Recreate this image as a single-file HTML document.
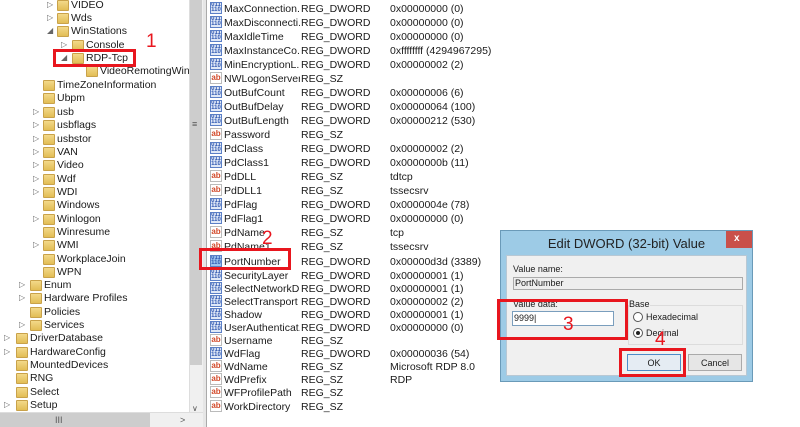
<!DOCTYPE html>
<html><head><meta charset="utf-8"><style>
*{margin:0;padding:0;box-sizing:border-box}
body{width:800px;height:427px;overflow:hidden;background:#fff;font-family:"Liberation Sans",sans-serif;font-size:10.5px;color:#1a1a1a;position:relative}
.a{position:absolute;white-space:nowrap;line-height:14px}
.c{width:76px;overflow:hidden}
.f{position:absolute;width:12px;height:11px;background:linear-gradient(#f3d98a,#e2bd55);border:1px solid #c9a24a;border-radius:1px}
.e{position:absolute;font-size:8px;color:#666;line-height:14px}
.d{position:absolute;width:12px;height:12px;background:#dfe8f7;border:1px solid #5b7fc6;font-size:6px;line-height:5px;color:#2f57b0;font-weight:bold;text-align:center;overflow:hidden}
.s{position:absolute;width:12px;height:12px;background:#fff;border:1px solid #bbb;font-size:8px;line-height:10px;color:#d24a2a;font-weight:bold;text-align:center}
.r{position:absolute;border:3px solid #e8161e}
.n{position:absolute;color:#e8161e;font-size:19px;line-height:20px}
#L{position:absolute;left:0;top:0;width:189px;height:412px;overflow:hidden;background:#fff}
</style></head><body>
<div id="L">
<div class="e" style="left:47px;top:-2px">▷</div><div class="f" style="left:57px;top:0px"></div><div class="a" style="left:71px;top:-2px">VIDEO</div>
<div class="e" style="left:47px;top:11px">▷</div><div class="f" style="left:57px;top:13px"></div><div class="a" style="left:71px;top:11px">Wds</div>
<div class="e" style="left:47px;top:24px">◢</div><div class="f" style="left:57px;top:26px"></div><div class="a" style="left:71px;top:24px">WinStations</div>
<div class="e" style="left:61px;top:38px">▷</div><div class="f" style="left:72px;top:40px"></div><div class="a" style="left:86px;top:38px">Console</div>
<div class="e" style="left:61px;top:51px">◢</div><div class="f" style="left:72px;top:53px"></div><div class="a" style="left:86px;top:51px">RDP-Tcp</div>
<div class="f" style="left:86px;top:66px"></div><div class="a" style="left:100px;top:64px">VideoRemotingWindow</div>
<div class="f" style="left:43px;top:80px"></div><div class="a" style="left:57px;top:78px">TimeZoneInformation</div>
<div class="f" style="left:43px;top:93px"></div><div class="a" style="left:57px;top:91px">Ubpm</div>
<div class="e" style="left:33px;top:105px">▷</div><div class="f" style="left:43px;top:107px"></div><div class="a" style="left:57px;top:105px">usb</div>
<div class="e" style="left:33px;top:118px">▷</div><div class="f" style="left:43px;top:120px"></div><div class="a" style="left:57px;top:118px">usbflags</div>
<div class="e" style="left:33px;top:132px">▷</div><div class="f" style="left:43px;top:134px"></div><div class="a" style="left:57px;top:132px">usbstor</div>
<div class="e" style="left:33px;top:145px">▷</div><div class="f" style="left:43px;top:147px"></div><div class="a" style="left:57px;top:145px">VAN</div>
<div class="e" style="left:33px;top:158px">▷</div><div class="f" style="left:43px;top:160px"></div><div class="a" style="left:57px;top:158px">Video</div>
<div class="e" style="left:33px;top:172px">▷</div><div class="f" style="left:43px;top:174px"></div><div class="a" style="left:57px;top:172px">Wdf</div>
<div class="e" style="left:33px;top:185px">▷</div><div class="f" style="left:43px;top:187px"></div><div class="a" style="left:57px;top:185px">WDI</div>
<div class="f" style="left:43px;top:200px"></div><div class="a" style="left:57px;top:198px">Windows</div>
<div class="e" style="left:33px;top:212px">▷</div><div class="f" style="left:43px;top:214px"></div><div class="a" style="left:57px;top:212px">Winlogon</div>
<div class="f" style="left:43px;top:227px"></div><div class="a" style="left:57px;top:225px">Winresume</div>
<div class="e" style="left:33px;top:238px">▷</div><div class="f" style="left:43px;top:240px"></div><div class="a" style="left:57px;top:238px">WMI</div>
<div class="f" style="left:43px;top:254px"></div><div class="a" style="left:57px;top:252px">WorkplaceJoin</div>
<div class="f" style="left:43px;top:267px"></div><div class="a" style="left:57px;top:265px">WPN</div>
<div class="e" style="left:19px;top:278px">▷</div><div class="f" style="left:30px;top:280px"></div><div class="a" style="left:44px;top:278px">Enum</div>
<div class="e" style="left:19px;top:291px">▷</div><div class="f" style="left:30px;top:293px"></div><div class="a" style="left:44px;top:291px">Hardware Profiles</div>
<div class="f" style="left:30px;top:307px"></div><div class="a" style="left:44px;top:305px">Policies</div>
<div class="e" style="left:19px;top:318px">▷</div><div class="f" style="left:30px;top:320px"></div><div class="a" style="left:44px;top:318px">Services</div>
<div class="e" style="left:4px;top:331px">▷</div><div class="f" style="left:16px;top:333px"></div><div class="a" style="left:30px;top:331px">DriverDatabase</div>
<div class="e" style="left:4px;top:345px">▷</div><div class="f" style="left:16px;top:347px"></div><div class="a" style="left:30px;top:345px">HardwareConfig</div>
<div class="f" style="left:16px;top:360px"></div><div class="a" style="left:30px;top:358px">MountedDevices</div>
<div class="f" style="left:16px;top:373px"></div><div class="a" style="left:30px;top:371px">RNG</div>
<div class="f" style="left:16px;top:387px"></div><div class="a" style="left:30px;top:385px">Select</div>
<div class="e" style="left:4px;top:398px">▷</div><div class="f" style="left:16px;top:400px"></div><div class="a" style="left:30px;top:398px">Setup</div>
</div>
<!-- scrollbars -->
<div style="position:absolute;left:189px;top:0;width:14px;height:412px;background:#f0f0f0;border-left:1px solid #ddd"></div>
<div style="position:absolute;left:190px;top:0;width:12px;height:365px;background:#cdcdcd"></div>
<div class="a" style="left:192px;top:117px;font-size:9px;color:#555">≡</div>
<div class="a" style="left:192px;top:402px;font-size:8px;color:#555">∨</div>
<div style="position:absolute;left:0;top:412px;width:203px;height:15px;background:#f0f0f0;border-top:1px solid #ddd"></div>
<div style="position:absolute;left:0;top:413px;width:150px;height:14px;background:#cdcdcd"></div>
<div class="a" style="left:55px;top:413px;font-size:9px;color:#555">III</div>
<div class="a" style="left:180px;top:413px;font-size:9px;color:#555">&gt;</div>
<div style="position:absolute;left:203px;top:0;width:4px;height:427px;background:#e6e6e6;border-right:1px solid #aaa"></div>
<!-- right list -->
<div class="d" style="left:210px;top:2px">011<br>110</div><div class="a c" style="left:224px;top:2px">MaxConnection...</div><div class="a" style="left:301px;top:2px">REG_DWORD</div><div class="a" style="left:390px;top:2px">0x00000000 (0)</div>
<div class="d" style="left:210px;top:16px">011<br>110</div><div class="a c" style="left:224px;top:16px">MaxDisconnecti...</div><div class="a" style="left:301px;top:16px">REG_DWORD</div><div class="a" style="left:390px;top:16px">0x00000000 (0)</div>
<div class="d" style="left:210px;top:30px">011<br>110</div><div class="a c" style="left:224px;top:30px">MaxIdleTime</div><div class="a" style="left:301px;top:30px">REG_DWORD</div><div class="a" style="left:390px;top:30px">0x00000000 (0)</div>
<div class="d" style="left:210px;top:44px">011<br>110</div><div class="a c" style="left:224px;top:44px">MaxInstanceCo...</div><div class="a" style="left:301px;top:44px">REG_DWORD</div><div class="a" style="left:390px;top:44px">0xffffffff (4294967295)</div>
<div class="d" style="left:210px;top:58px">011<br>110</div><div class="a c" style="left:224px;top:58px">MinEncryptionL...</div><div class="a" style="left:301px;top:58px">REG_DWORD</div><div class="a" style="left:390px;top:58px">0x00000002 (2)</div>
<div class="s" style="left:210px;top:72px">ab</div><div class="a c" style="left:224px;top:72px">NWLogonServer</div><div class="a" style="left:301px;top:72px">REG_SZ</div>
<div class="d" style="left:210px;top:86px">011<br>110</div><div class="a c" style="left:224px;top:86px">OutBufCount</div><div class="a" style="left:301px;top:86px">REG_DWORD</div><div class="a" style="left:390px;top:86px">0x00000006 (6)</div>
<div class="d" style="left:210px;top:100px">011<br>110</div><div class="a c" style="left:224px;top:100px">OutBufDelay</div><div class="a" style="left:301px;top:100px">REG_DWORD</div><div class="a" style="left:390px;top:100px">0x00000064 (100)</div>
<div class="d" style="left:210px;top:114px">011<br>110</div><div class="a c" style="left:224px;top:114px">OutBufLength</div><div class="a" style="left:301px;top:114px">REG_DWORD</div><div class="a" style="left:390px;top:114px">0x00000212 (530)</div>
<div class="s" style="left:210px;top:128px">ab</div><div class="a c" style="left:224px;top:128px">Password</div><div class="a" style="left:301px;top:128px">REG_SZ</div>
<div class="d" style="left:210px;top:142px">011<br>110</div><div class="a c" style="left:224px;top:142px">PdClass</div><div class="a" style="left:301px;top:142px">REG_DWORD</div><div class="a" style="left:390px;top:142px">0x00000002 (2)</div>
<div class="d" style="left:210px;top:156px">011<br>110</div><div class="a c" style="left:224px;top:156px">PdClass1</div><div class="a" style="left:301px;top:156px">REG_DWORD</div><div class="a" style="left:390px;top:156px">0x0000000b (11)</div>
<div class="s" style="left:210px;top:170px">ab</div><div class="a c" style="left:224px;top:170px">PdDLL</div><div class="a" style="left:301px;top:170px">REG_SZ</div><div class="a" style="left:390px;top:170px">tdtcp</div>
<div class="s" style="left:210px;top:184px">ab</div><div class="a c" style="left:224px;top:184px">PdDLL1</div><div class="a" style="left:301px;top:184px">REG_SZ</div><div class="a" style="left:390px;top:184px">tssecsrv</div>
<div class="d" style="left:210px;top:198px">011<br>110</div><div class="a c" style="left:224px;top:198px">PdFlag</div><div class="a" style="left:301px;top:198px">REG_DWORD</div><div class="a" style="left:390px;top:198px">0x0000004e (78)</div>
<div class="d" style="left:210px;top:212px">011<br>110</div><div class="a c" style="left:224px;top:212px">PdFlag1</div><div class="a" style="left:301px;top:212px">REG_DWORD</div><div class="a" style="left:390px;top:212px">0x00000000 (0)</div>
<div class="s" style="left:210px;top:226px">ab</div><div class="a c" style="left:224px;top:226px">PdName</div><div class="a" style="left:301px;top:226px">REG_SZ</div><div class="a" style="left:390px;top:226px">tcp</div>
<div class="s" style="left:210px;top:240px">ab</div><div class="a c" style="left:224px;top:240px">PdName1</div><div class="a" style="left:301px;top:240px">REG_SZ</div><div class="a" style="left:390px;top:240px">tssecsrv</div>
<div class="d" style="left:210px;top:255px;background:#9cc3f0">011<br>110</div><div class="a c" style="left:224px;top:255px">PortNumber</div><div class="a" style="left:301px;top:255px">REG_DWORD</div><div class="a" style="left:390px;top:255px">0x00000d3d (3389)</div>
<div class="d" style="left:210px;top:269px">011<br>110</div><div class="a c" style="left:224px;top:269px">SecurityLayer</div><div class="a" style="left:301px;top:269px">REG_DWORD</div><div class="a" style="left:390px;top:269px">0x00000001 (1)</div>
<div class="d" style="left:210px;top:282px">011<br>110</div><div class="a c" style="left:224px;top:282px">SelectNetworkD...</div><div class="a" style="left:301px;top:282px">REG_DWORD</div><div class="a" style="left:390px;top:282px">0x00000001 (1)</div>
<div class="d" style="left:210px;top:295px">011<br>110</div><div class="a c" style="left:224px;top:295px">SelectTransport</div><div class="a" style="left:301px;top:295px">REG_DWORD</div><div class="a" style="left:390px;top:295px">0x00000002 (2)</div>
<div class="d" style="left:210px;top:308px">011<br>110</div><div class="a c" style="left:224px;top:308px">Shadow</div><div class="a" style="left:301px;top:308px">REG_DWORD</div><div class="a" style="left:390px;top:308px">0x00000001 (1)</div>
<div class="d" style="left:210px;top:321px">011<br>110</div><div class="a c" style="left:224px;top:321px">UserAuthenticat...</div><div class="a" style="left:301px;top:321px">REG_DWORD</div><div class="a" style="left:390px;top:321px">0x00000000 (0)</div>
<div class="s" style="left:210px;top:334px">ab</div><div class="a c" style="left:224px;top:334px">Username</div><div class="a" style="left:301px;top:334px">REG_SZ</div>
<div class="d" style="left:210px;top:347px">011<br>110</div><div class="a c" style="left:224px;top:347px">WdFlag</div><div class="a" style="left:301px;top:347px">REG_DWORD</div><div class="a" style="left:390px;top:347px">0x00000036 (54)</div>
<div class="s" style="left:210px;top:360px">ab</div><div class="a c" style="left:224px;top:360px">WdName</div><div class="a" style="left:301px;top:360px">REG_SZ</div><div class="a" style="left:390px;top:360px">Microsoft RDP 8.0</div>
<div class="s" style="left:210px;top:373px">ab</div><div class="a c" style="left:224px;top:373px">WdPrefix</div><div class="a" style="left:301px;top:373px">REG_SZ</div><div class="a" style="left:390px;top:373px">RDP</div>
<div class="s" style="left:210px;top:386px">ab</div><div class="a c" style="left:224px;top:386px">WFProfilePath</div><div class="a" style="left:301px;top:386px">REG_SZ</div>
<div class="s" style="left:210px;top:400px">ab</div><div class="a c" style="left:224px;top:400px">WorkDirectory</div><div class="a" style="left:301px;top:400px">REG_SZ</div>
<!-- dialog -->
<div style="position:absolute;left:500px;top:230px;width:253px;height:152px;background:#9dcbe6;border:1px solid #6a9ab8"></div>
<div style="position:absolute;left:726px;top:231px;width:26px;height:17px;background:#c9504a"></div>
<div class="a" style="left:734px;top:232px;color:#fff;font-weight:bold;font-size:10px">x</div>
<div class="a" style="left:500px;top:237px;width:253px;text-align:center;font-size:13px;color:#222">Edit DWORD (32-bit) Value</div>
<div style="position:absolute;left:506px;top:255px;width:241px;height:121px;background:#f0f0f0;border:1px solid #b8c8d4"></div>
<div class="a" style="left:513px;top:262px;font-size:9px">Value name:</div>
<div style="position:absolute;left:513px;top:277px;width:230px;height:13px;background:#eee;border:1px solid #aaa"></div>
<div class="a" style="left:515px;top:276px;font-size:9px">PortNumber</div>
<div class="a" style="left:513px;top:297px;font-size:9px">Value data:</div>
<div style="position:absolute;left:512px;top:311px;width:102px;height:15px;background:#fff;border:1px solid #7a9ebd"></div>
<div class="a" style="left:514px;top:311px;font-size:9px">9999|</div>
<div style="position:absolute;left:628px;top:305px;width:115px;height:40px;border:1px solid #dcdcdc"></div>
<div class="a" style="left:629px;top:297px;font-size:9px;background:#f0f0f0">Base</div>
<div style="position:absolute;left:633px;top:312px;width:10px;height:10px;border:1px solid #555;border-radius:50%;background:#fff"></div>
<div class="a" style="left:646px;top:310px;font-size:9px">Hexadecimal</div>
<div style="position:absolute;left:633px;top:328px;width:10px;height:10px;border:1px solid #555;border-radius:50%;background:#fff"></div>
<div style="position:absolute;left:636px;top:331px;width:4px;height:4px;border-radius:50%;background:#222"></div>
<div class="a" style="left:646px;top:326px;font-size:9px">Decimal</div>
<div style="position:absolute;left:627px;top:354px;width:54px;height:17px;background:#e5ecf3;border:1px solid #4e8cc8"></div>
<div class="a" style="left:627px;top:356px;width:54px;text-align:center;font-size:9px">OK</div>
<div style="position:absolute;left:688px;top:354px;width:54px;height:17px;background:#e6e6e6;border:1px solid #aaa"></div>
<div class="a" style="left:688px;top:356px;width:54px;text-align:center;font-size:9px">Cancel</div>
<!-- red annotations -->
<div class="r" style="left:53px;top:49px;width:83px;height:18px"></div>
<div class="n" style="left:146px;top:32px">1</div>
<div class="r" style="left:199px;top:248px;width:92px;height:22px"></div>
<div class="n" style="left:262px;top:229px">2</div>
<div class="r" style="left:497px;top:299px;width:131px;height:41px"></div>
<div class="n" style="left:563px;top:315px">3</div>
<div class="r" style="left:619px;top:348px;width:67px;height:29px"></div>
<div class="n" style="left:655px;top:330px">4</div>
</body></html>
